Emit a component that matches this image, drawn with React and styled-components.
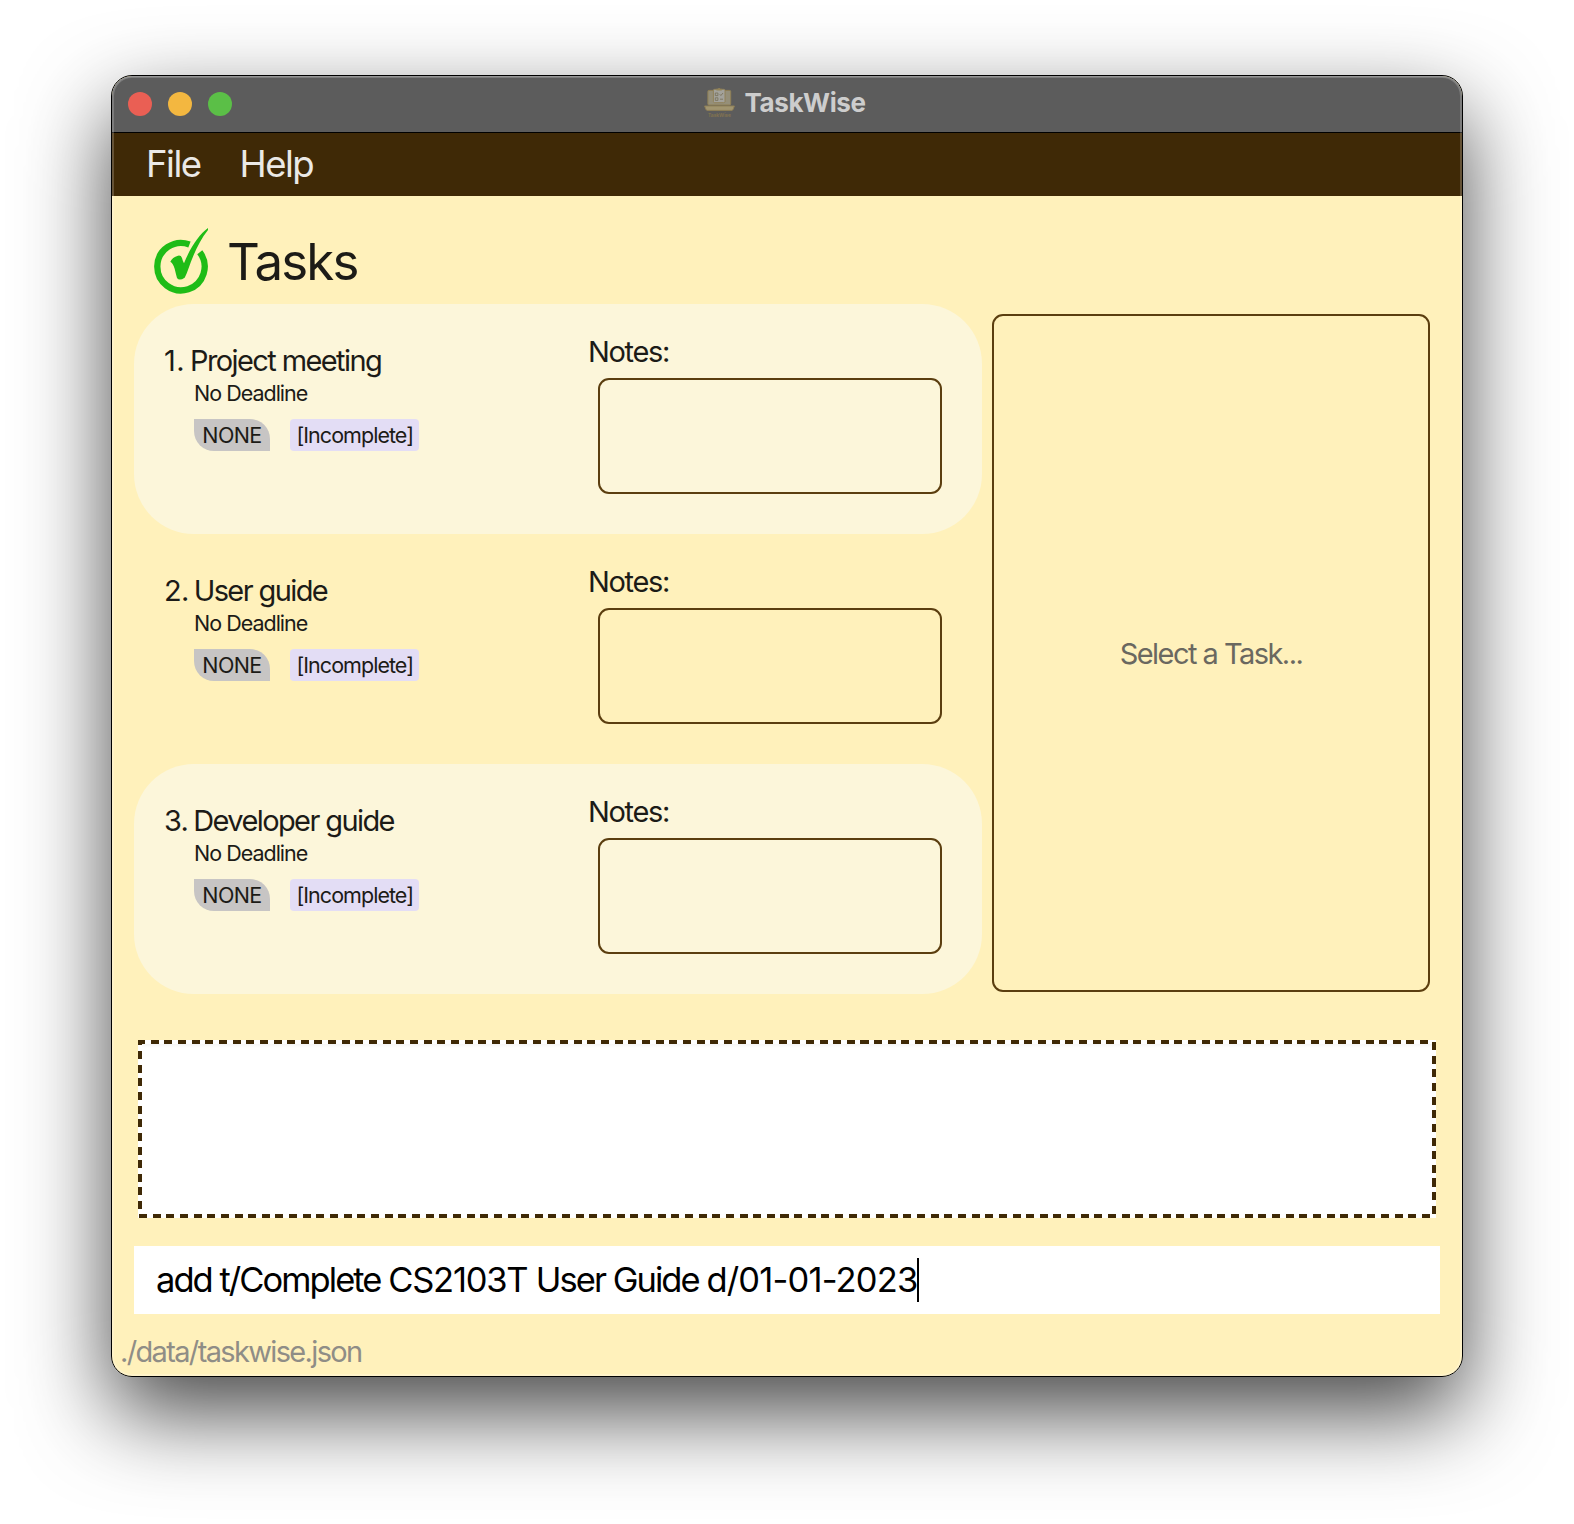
import React from "react";
import styled, { createGlobalStyle } from "styled-components";

const colors = {
  bar: "#3f2906",
  line: "#5b3e0f",
  paper: "#fff1bb",
  card: "#fcf6da",
  ink: "#1c1b17",
};

const GlobalStyle = createGlobalStyle`
  *, *::before, *::after { box-sizing: border-box; }
  body {
    margin: 0;
    background: #fff;
    font-family: Inter, "Liberation Sans", sans-serif;
    color: ${colors.ink};
  }
`;

const Desktop = styled.div`
  width: 1574px;
  height: 1524px;
  padding: 75px 111px 0;
  overflow: hidden;
`;

const Window = styled.div`
  position: relative;
  width: 1352px;
  height: 1302px;
  display: flex;
  flex-direction: column;
  border: 1px solid #000;
  border-radius: 21px;
  background: ${colors.paper};
  overflow: hidden;

  &::after {
    content: "";
    position: absolute;
    inset: 0;
    border-radius: 20px;
    box-shadow: inset 0 1px 0 rgba(255, 255, 255, 0.2), inset 0 0 0 2px rgba(255, 255, 255, 0.2);
    pointer-events: none;
  }
`;

const Shadow = styled.div`
  border-radius: 21px;
  box-shadow: 0 36px 88px rgba(0, 0, 0, 0.72);
`;

const TitleBar = styled.header`
  display: grid;
  grid-template-columns: 1fr auto 1fr;
  align-items: center;
  flex: none;
  height: 57px;
  padding: 0 18px 0 16px;
  background: #5c5c5c;
  border-bottom: 1px solid #000;
`;

const Lights = styled.div`
  display: flex;
  gap: 16px;
`;

const Light = styled.span`
  width: 24px;
  height: 24px;
  border-radius: 50%;
  background: ${(p) => p.$color};
`;

const WindowTitle = styled.div`
  display: flex;
  align-items: center;
  gap: 9px;
  margin: 0 2px 3px 0;
  font-size: 26px;
  line-height: 32px;
  font-weight: 700;
  letter-spacing: -0.4px;
  color: #cdcdcd;
`;

const MenuBar = styled.nav`
  display: flex;
  flex: none;
  gap: 39px;
  height: 63px;
  padding: 0 0 1px 34px;
  background: ${colors.bar};
`;

const MenuItem = styled.span`
  font-size: 36.5px;
  line-height: 62px;
  letter-spacing: -1.5px;
  color: #ebe9e6;
`;

const Body = styled.main`
  flex: none;
  padding: 32px 22px 0;
`;

const Heading = styled.div`
  display: flex;
  align-items: center;
  gap: 19px;
  height: 66px;
  margin-left: 20px;
`;

const HeadingText = styled.h1`
  margin: 2px 0 0;
  font-size: 51px;
  line-height: 66px;
  font-weight: 400;
  letter-spacing: -1.8px;
`;

const Panes = styled.div`
  display: flex;
  gap: 10px;
  margin-top: 10px;
`;

const TaskList = styled.div`
  width: 848px;
`;

const Card = styled.article`
  display: grid;
  grid-template-columns: 424px 354px;
  height: 230px;
  padding-left: 30px;
  border-radius: 60px;
  background: ${(p) => (p.$shaded ? colors.card : "transparent")};
`;

const Summary = styled.div`
  padding-top: 38px;
`;

const TaskTitle = styled.div`
  display: flex;
  gap: 5px;
  font-size: 29px;
  line-height: 37px;
  letter-spacing: -1.6px;
`;

const TaskNumber = styled.span`
  letter-spacing: ${(p) => (p.$narrow ? "0.4px" : "-0.7px")};
`;

const Deadline = styled.div`
  margin-left: 30px;
  font-size: 21.5px;
  line-height: 29px;
  letter-spacing: -1px;
`;

const Tags = styled.div`
  display: flex;
  gap: 20px;
  margin: 11px 0 0 30px;
  font-size: 21.5px;
  line-height: 32px;
`;

const Priority = styled.span`
  width: 76px;
  height: 32px;
  padding-left: 8.3px;
  border-radius: 0 20px 0 20px;
  background: #c7c5c4;
  letter-spacing: -0.61px;
`;

const Status = styled.span`
  width: 129px;
  height: 32px;
  padding-left: 6.4px;
  border-radius: 4px;
  background: #e3ddf5;
  letter-spacing: -0.96px;
`;

const Notes = styled.div`
  padding-top: 30px;
`;

const NotesLabel = styled.div`
  font-size: 29px;
  line-height: 35px;
  letter-spacing: -1.33px;
`;

const NotesBox = styled.div`
  width: 344px;
  height: 116px;
  margin: 9px 0 0 10px;
  border: 2px solid ${colors.line};
  border-radius: 11px;
`;

const Detail = styled.section`
  display: flex;
  align-items: center;
  justify-content: center;
  width: 438px;
  height: 678px;
  margin-top: 10px;
  padding-top: 2px;
  border: 2px solid ${colors.line};
  border-radius: 11px;
  font-size: 29px;
  line-height: 36px;
  letter-spacing: -1.54px;
  color: #6a6860;
`;

const dashes = (dir, start) =>
  `repeating-linear-gradient(${dir}, ${colors.bar} ${start}px, ${colors.bar} ${start + 8}px, #fff ${start + 8}px, #fff ${start + 13.65}px)`;

const Result = styled.section`
  height: 178px;
  margin: 46px 4px 0;
  background:
    ${dashes("90deg", -0.95)} 0 0 / 1294px 4px no-repeat,
    ${dashes("90deg", 0.95)} 0 100% / 100% 4px no-repeat,
    ${dashes("180deg", -2.65)} 0 0 / 4px 100% no-repeat,
    ${dashes("180deg", 2)} 100% 0 / 4px 100% no-repeat,
    linear-gradient(#ececec, #fff 8px);
`;

const CommandField = styled.div`
  display: flex;
  align-items: center;
  height: 68px;
  margin-top: 28px;
  padding-left: 22px;
  background: #fff;
  font-size: 34.5px;
  line-height: 68px;
  color: #000;
  white-space: pre;
`;

const Word = styled.span`
  letter-spacing: ${(p) => p.$tracking}px;
`;

const Caret = styled.span`
  width: 2px;
  height: 44px;
  background: #000;
`;

const Footer = styled.footer`
  padding: 13px 0 0 8px;
  font-size: 29px;
  line-height: 49px;
  letter-spacing: -1.65px;
  color: #8f8d86;
`;

const AppIcon = () => (
  <svg width="31" height="31" viewBox="0 0 31 31">
    <rect x="3.9" y="3.4" width="22.8" height="14.6" rx="1" fill="#958f79" stroke="#8f7f55" />
    <path d="M0.6 19h29.8l-1.4 3.6q-.4.8-1.2.8H3.2q-.8 0-1.2-.8z" fill="#a19570" stroke="#8f7f55" strokeWidth="0.9" />
    <rect x="9.4" y="2.3" width="11.6" height="13.4" rx="1.2" fill="#a3a29b" stroke="#8f7f55" strokeWidth="0.9" />
    <path d="M12.4 3.5V1.7h1.5a1.3 1.3 0 0 1 2.4 0h1.5v1.8z" fill="#948457" />
    <path d="M11.3 6h2.6v2.6h-2.6zM11.3 10.8h2.6v2.6h-2.6zM15.7 7.2l1.2 1.3 2.1-2.5M16 12.2h3" fill="none" stroke="#7b745e" strokeWidth="0.9" />
    <text x="4" y="30" fontSize="5" fontWeight="600" letterSpacing="0" textLength="23" fill="#85754f">TaskWise</text>
  </svg>
);

const CheckIcon = () => (
  <svg width="54" height="66" viewBox="0 0 162 198">
    <path d="M137.3 72.8A71 71 0 1 1 106.4 49.7" fill="none" stroke="#1fbc17" strokeWidth="19" />
    <path
      d="M162 0C136 18 109 58 90 106Q87 102 84 90Q81 81 72 83Q55 88 49 101Q57 106 62 122Q66 139 69 150Q76 160 92 149Q98 138 103 123C117 82 136 38 162 6Z"
      fill="#1fbc17"
    />
  </svg>
);

const tasks = ["Project meeting", "User guide", "Developer guide"];

const TaskCard = ({ number, name }) => (
  <Card $shaded={number % 2 === 1}>
    <Summary>
      <TaskTitle>
        <TaskNumber $narrow={number === 1}>{number}.</TaskNumber>
        <span>{name}</span>
      </TaskTitle>
      <Deadline>No Deadline</Deadline>
      <Tags>
        <Priority>NONE</Priority>
        <Status>[Incomplete]</Status>
      </Tags>
    </Summary>
    <Notes>
      <NotesLabel>Notes:</NotesLabel>
      <NotesBox />
    </Notes>
  </Card>
);

export default function App() {
  return (
    <Desktop>
      <GlobalStyle />
      <Shadow>
        <Window>
          <TitleBar>
            <Lights>
              <Light $color="#ea5f54" />
              <Light $color="#f3b740" />
              <Light $color="#5bbf47" />
            </Lights>
            <WindowTitle>
              <AppIcon />
              TaskWise
            </WindowTitle>
          </TitleBar>
          <MenuBar>
            <MenuItem>File</MenuItem>
            <MenuItem>Help</MenuItem>
          </MenuBar>
          <Body>
            <Heading>
              <CheckIcon />
              <HeadingText>Tasks</HeadingText>
            </Heading>
            <Panes>
              <TaskList>
                {tasks.map((name, i) => (
                  <TaskCard key={name} number={i + 1} name={name} />
                ))}
              </TaskList>
              <Detail>Select a Task...</Detail>
            </Panes>
            <Result />
            <CommandField>
              <Word $tracking={-1.95}>add t/Complete </Word>
              <Word $tracking={-1.25}>CS2103T </Word>
              <Word $tracking={-1.95}>User Guide </Word>
              <Word $tracking={-0.82}>d/01-01-2023</Word>
              <Caret />
            </CommandField>
          </Body>
          <Footer>./data/taskwise.json</Footer>
        </Window>
      </Shadow>
    </Desktop>
  );
}
